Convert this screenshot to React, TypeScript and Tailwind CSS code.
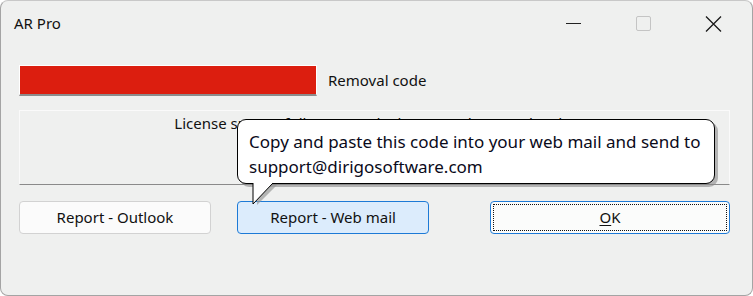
import React from "react";

export default function App() {
  const font = { fontFamily: '"Noto Sans", "Segoe UI", sans-serif' };
  return (
    <div className="w-[753px] h-[296px] bg-white" style={font}>
      <div className="relative w-[753px] h-[296px] bg-[#eff0ef] rounded-[8px] border border-[#a4a4a4] border-t-[#c8c8c8] overflow-hidden text-[#111]">
        {/* title bar */}
        <div className="flex items-center h-[44px] pl-[13px]">
          <div className="text-[15px] leading-none mt-[1px]">AR Pro</div>
          <div className="ml-auto flex items-center h-full">
            <div className="w-[70px] flex justify-center">
              <div className="w-[15px] h-[1px] bg-[#222] mt-[1px]" />
            </div>
            <div className="w-[70px] flex justify-center">
              <div className="w-[15px] h-[15px] border border-[#c4c4c4] rounded-[2px] mt-[1px]" />
            </div>
            <div className="w-[70px] flex justify-center mr-[4px]">
              <svg width="17" height="16" viewBox="0 0 17 16" className="mt-[1px]">
                <path d="M1 0.5 L16 15.5 M16 0.5 L1 15.5" stroke="#1a1a1a" strokeWidth="1.3" />
              </svg>
            </div>
          </div>
        </div>

        {/* content */}
        <div className="pl-[18px] pr-[22px] pt-[20px]">
          <div className="flex items-center">
            <div className="w-[298px] h-[31px] border border-white border-b-[2px] border-b-[#8c8c8c] bg-[#dc1e0f]" />
            <div className="ml-[11px] text-[15px] leading-none">Removal code</div>
          </div>
          <div className="mt-[14px] h-[75px] border border-[#fafafa] border-b-[#8a8a8a] pt-[1px] text-center text-[15px]">
            License successfully removed. Please send removal code.
          </div>
          <div className="flex mt-[16px] text-[15px]">
            <div className="w-[192px] h-[33px] flex items-center justify-center rounded-[4px] border border-[#d2d2d2] bg-[#fbfbfb]">
              Report - Outlook
            </div>
            <div className="ml-[26px] w-[192px] h-[33px] flex items-center justify-center rounded-[4px] border border-[#1d7ad6] bg-[#dcecfc]">
              Report - Web mail
            </div>
            <div className="ml-[61px] w-[240px] h-[33px] p-[2px] rounded-[4px] border border-[#1d7ad6] bg-[#fbfcfb]">
              <div className="w-full h-full border border-dotted border-[#111] flex items-center justify-center">
                <span className="underline underline-offset-2">O</span>K
              </div>
            </div>
          </div>
        </div>

        {/* balloon tooltip */}
        <div className="absolute left-[236px] top-[118px]">
          <div className="relative">
            <div className="absolute left-[3px] top-[3px] w-[478px] h-[65px] rounded-[9px] bg-[#8a8a8a] opacity-60" />
            <div className="relative w-[478px] h-[65px] rounded-[9px] border border-black bg-white pl-[11px] pt-[9px] text-[17px] leading-[25px] text-[#0a0a1a]">
              <div>Copy and paste this code into your web mail and send to</div>
              <div>support@dirigosoftware.com</div>
            </div>
            <svg className="absolute left-[15px] top-[64px]" width="26" height="24" viewBox="0 0 26 24">
              <polygon points="3,1 23,1 3,21" fill="#9a9a9a" opacity="0.7" transform="translate(2,1)" />
              <polygon points="1,0 21,0 1,21" fill="white" />
              <path d="M1 0 L1 21 L21 0" stroke="black" strokeWidth="1" fill="none" />
            </svg>
          </div>
        </div>
      </div>
    </div>
  );
}
